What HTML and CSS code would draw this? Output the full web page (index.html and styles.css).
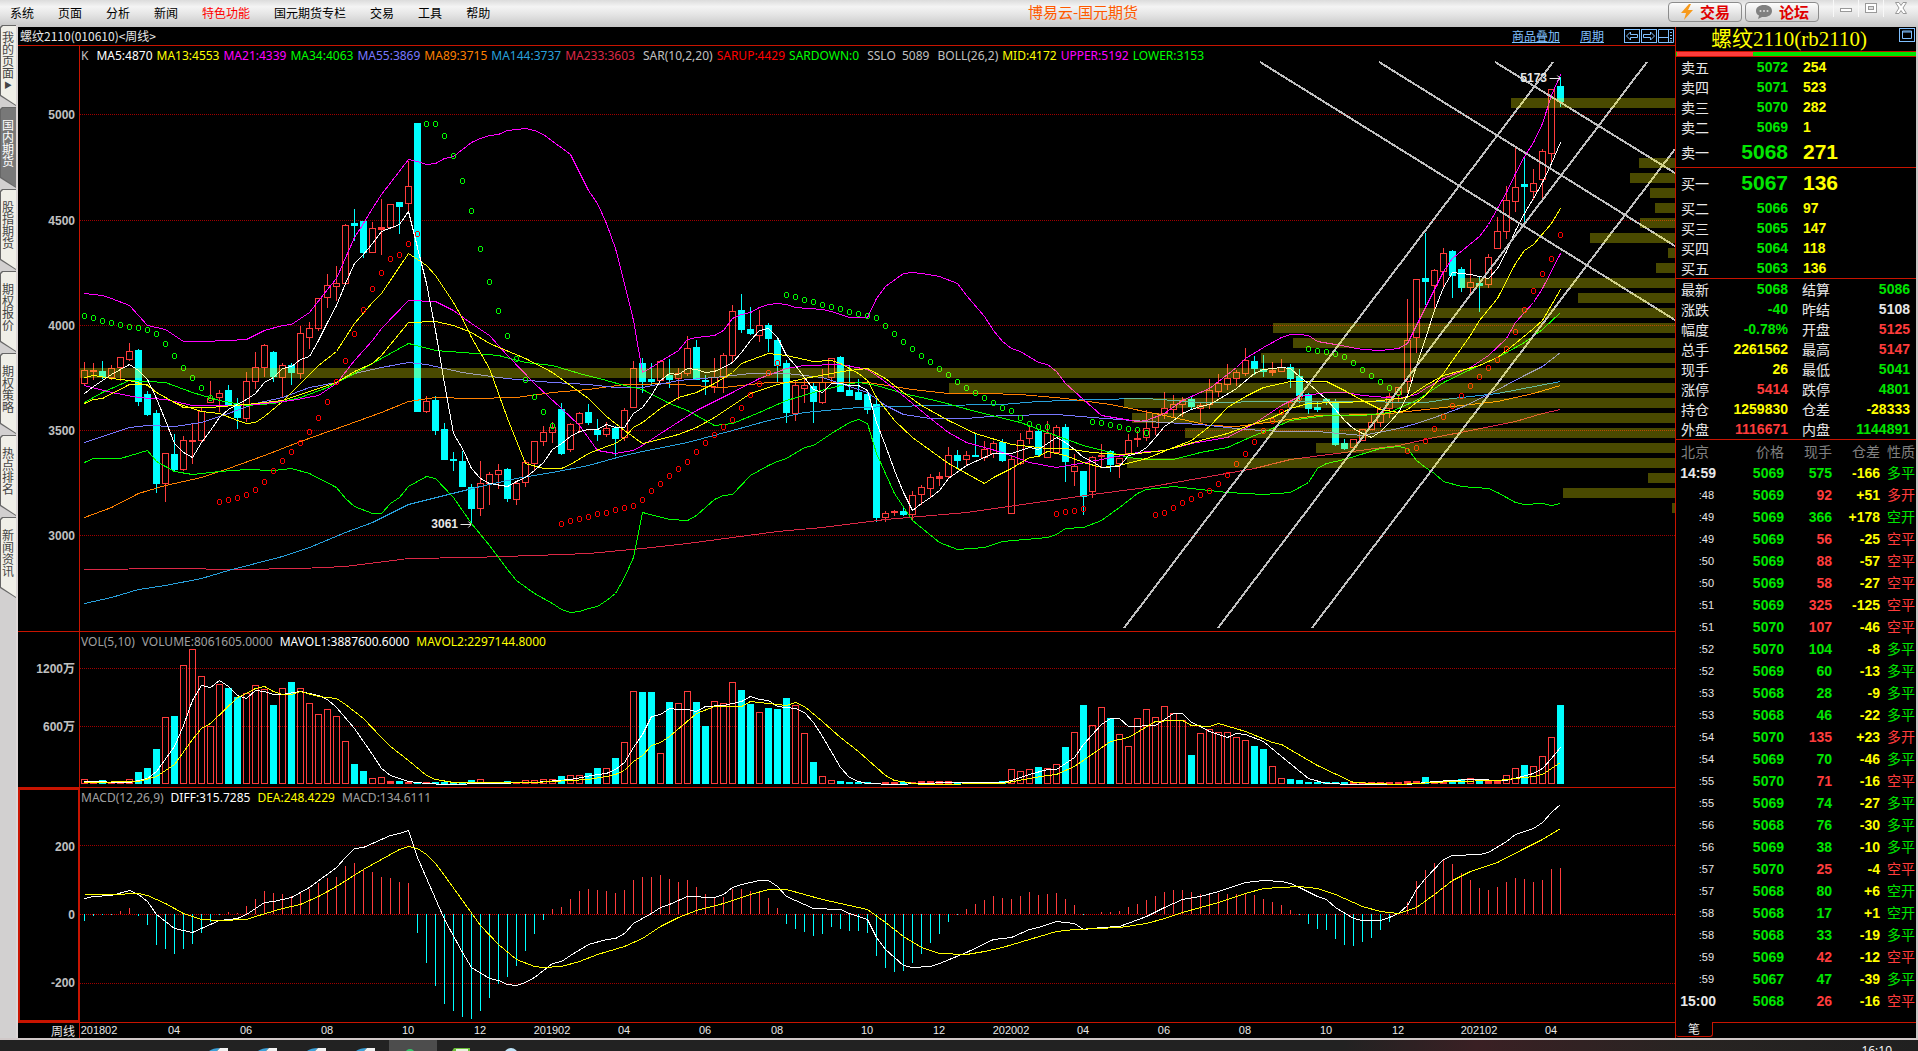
FILE: index.html
```html
<!DOCTYPE html>
<html lang="zh-CN">
<head>
    <meta charset="UTF-8">
    <meta name="viewport" content="width=device-width, initial-scale=1.0">
    <title>博易云-国元期货</title>
    <link rel="stylesheet" href="styles.css">
</head>
<body>
    <header class="menubar">
        <nav class="menu">
            <a href="#">系统</a>
            <a href="#">页面</a>
            <a href="#">分析</a>
            <a href="#">新闻</a>
            <a href="#" class="hot">特色功能</a>
            <a href="#">国元期货专栏</a>
            <a href="#">交易</a>
            <a href="#">工具</a>
            <a href="#">帮助</a>
        </nav>
        <h1 class="app-title">博易云-国元期货</h1>
        <div class="tools">
            <button class="tool-btn">
                <svg width="14" height="18" viewBox="0 0 14 18"><path d="M9 1 L1 10 H6 L4 17 L13 7 H8 L11 1 Z" fill="#f79a1c"/></svg>
                交易
            </button>
            <button class="tool-btn">
                <svg width="18" height="16" viewBox="0 0 18 16"><path d="M9 1 C4 1 1 3.500 1 7 C1 9 2 10.500 4 11.500 L3 15 L7 13 C13 13.500 17 11 17 7 C17 3.500 14 1 9 1 Z" fill="#808080"/><circle cx="5.500" cy="7" r="1" fill="#ddd"/><circle cx="9" cy="7" r="1" fill="#ddd"/><circle cx="12.500" cy="7" r="1" fill="#ddd"/></svg>
                论坛
            </button>
            <div class="window-btns">
                <button aria-label="最小化"><svg width="14" height="14" viewBox="0 0 14 14"><rect x="1.500" y="7.500" width="11" height="3" fill="#fff" stroke="#999"/></svg></button>
                <button aria-label="还原"><svg width="14" height="14" viewBox="0 0 14 14"><rect x="1.500" y="2.500" width="11" height="9" fill="#fff" stroke="#999"/><rect x="4.500" y="5.500" width="5" height="3" fill="#ddd" stroke="#999"/></svg></button>
                <button class="win-close" aria-label="关闭"><svg width="14" height="14" viewBox="0 0 14 14"><path d="M1.500 1.500 H5 L7 4.500 L9 1.500 H12.500 L9 7 L12.500 12.500 H9 L7 9.500 L5 12.500 H1.500 L5 7 Z" fill="#fff" stroke="#999"/></svg></button>
            </div>
        </div>
    </header>

    <main class="workspace">
        <aside class="side-tabs">
            <button class="side-tab arrow">我的页面<small>▶</small></button>
            <button class="side-tab active">国内期货</button>
            <button class="side-tab">股指期货</button>
            <button class="side-tab">期权报价</button>
            <button class="side-tab">期权策略</button>
            <button class="side-tab">热点排名</button>
            <button class="side-tab">新闻资讯</button>
        </aside>

        <section class="charts">
            <div class="chart-head">
                <span>螺纹2110(010610)&lt;周线&gt;</span>
                <div class="chart-links">
                    <a href="#">商品叠加</a>
                    <a href="#">周期</a>
                    <div class="chart-icons">
                        <button aria-label="向左"><svg width="16" height="14" viewBox="0 0 16 14"><rect x="0.500" y="0.500" width="15" height="13"/><path d="M2.500 7 L6.500 3 V5.500 H13.500 V8.500 H6.500 V11 Z"/></svg></button>
                        <button aria-label="向右"><svg width="16" height="14" viewBox="0 0 16 14"><rect x="0.500" y="0.500" width="15" height="13"/><path d="M13.500 7 L9.500 3 V5.500 H2.500 V8.500 H9.500 V11 Z"/></svg></button>
                        <button aria-label="侧栏"><svg width="16" height="14" viewBox="0 0 16 14"><path d="M0.500 0.500 H15.500 V13.500 H0.500 Z M10.500 0.500 V13.500 M0.500 8.500 H10.500 M12 3.500 H14 M12 6.500 H14 M12 9.500 H14 M12 12 H14"/></svg></button>
                    </div>
                </div>
            </div>

            <div class="panel panel-main">
                <div class="axis" id="axis-main"></div>
                <div class="plot">
                    <svg id="plot-main" viewBox="80 46 1595 585" preserveAspectRatio="none"></svg>
                    <p class="legend">
                        <span class="c-grey wide">K</span>
                        <span class="c-white">MA5:4870</span>
                        <span class="c-yellow">MA13:4553</span>
                        <span class="c-magenta">MA21:4339</span>
                        <span class="c-lime">MA34:4063</span>
                        <span class="c-violet">MA55:3869</span>
                        <span class="c-orange">MA89:3715</span>
                        <span class="c-blue">MA144:3737</span>
                        <span class="c-crimson wide">MA233:3603</span>
                        <span class="c-grey">SAR(10,2,20)</span>
                        <span class="c-red">SARUP:4429</span>
                        <span class="c-lime wide">SARDOWN:0</span>
                        <span class="c-grey wide">SSLO&nbsp; 5089</span>
                        <span class="c-grey">BOLL(26,2)</span>
                        <span class="c-yellow">MID:4172</span>
                        <span class="c-magenta">UPPER:5192</span>
                        <span class="c-lime">LOWER:3153</span>
                    </p>
                    <div id="marks"></div>
                </div>
            </div>

            <div class="panel panel-vol">
                <div class="axis" id="axis-vol"></div>
                <div class="plot">
                    <svg id="plot-vol" viewBox="80 632 1595 155" preserveAspectRatio="none"></svg>
                    <p class="legend loose">
                        <span class="c-dim">VOL(5,10)</span>
                        <span class="c-dim">VOLUME:8061605.0000</span>
                        <span class="c-white">MAVOL1:3887600.6000</span>
                        <span class="c-yellow">MAVOL2:2297144.8000</span>
                    </p>
                </div>
            </div>

            <div class="panel panel-macd">
                <div class="axis selected" id="axis-macd"></div>
                <div class="plot">
                    <svg id="plot-macd" viewBox="80 788 1595 234" preserveAspectRatio="none"></svg>
                    <p class="legend loose">
                        <span class="c-dim">MACD(12,26,9)</span>
                        <span class="c-white">DIFF:315.7285</span>
                        <span class="c-yellow">DEA:248.4229</span>
                        <span class="c-dim">MACD:134.6111</span>
                    </p>
                </div>
            </div>

            <div class="dates">
                <div class="period">周线</div>
                <div class="date-row" id="dates"></div>
            </div>
        </section>

        <section class="quote">
            <div class="quote-head">
                <h2>螺纹2110(rb2110)</h2>
                <button class="quote-max" aria-label="放大"><svg width="16" height="14" viewBox="0 0 16 14"><rect x="0.500" y="0.500" width="15" height="13"/><path d="M3.500 3 H12.500 V10.500 H3.500 Z M3.500 4 H12.500"/></svg></button>
            </div>
            <div class="ratio"><div class="ratio-red"></div></div>

            <table class="book">
                <tr><th>卖五</th><td class="down">5072</td><td class="qty">254</td></tr>
                <tr><th>卖四</th><td class="down">5071</td><td class="qty">523</td></tr>
                <tr><th>卖三</th><td class="down">5070</td><td class="qty">282</td></tr>
                <tr><th>卖二</th><td class="down">5069</td><td class="qty">1</td></tr>
                <tr class="best"><th>卖一</th><td class="down">5068</td><td class="qty">271</td></tr>
            </table>
            <table class="book">
                <tr class="best"><th>买一</th><td class="down">5067</td><td class="qty">136</td></tr>
                <tr><th>买二</th><td class="down">5066</td><td class="qty">97</td></tr>
                <tr><th>买三</th><td class="down">5065</td><td class="qty">147</td></tr>
                <tr><th>买四</th><td class="down">5064</td><td class="qty">118</td></tr>
                <tr><th>买五</th><td class="down">5063</td><td class="qty">136</td></tr>
            </table>
            <table class="book stats">
                <tr><th>最新</th><td class="down">5068</td><th>结算</th><td class="down">5086</td></tr>
                <tr><th>涨跌</th><td class="down">-40</td><th>昨结</th><td class="flat">5108</td></tr>
                <tr><th>幅度</th><td class="down">-0.78%</td><th>开盘</th><td class="up">5125</td></tr>
                <tr><th>总手</th><td class="num">2261562</td><th>最高</th><td class="up">5147</td></tr>
                <tr><th>现手</th><td class="num">26</td><th>最低</th><td class="down">5041</td></tr>
                <tr><th>涨停</th><td class="up">5414</td><th>跌停</th><td class="down">4801</td></tr>
                <tr><th>持仓</th><td class="num">1259830</td><th>仓差</th><td class="num">-28333</td></tr>
                <tr><th>外盘</th><td class="up">1116671</td><th>内盘</th><td class="down">1144891</td></tr>
            </table>
            <table class="ticks">
                <thead>
                    <tr><th>北京</th><th>价格</th><th>现手</th><th>仓差</th><th>性质</th></tr>
                </thead>
                <tbody id="ticks"></tbody>
            </table>
            <div class="quote-tabs"><button class="quote-tab">笔</button></div>
        </section>
    </main>

    <footer class="taskbar">
        <svg class="task-icons" width="540" height="11" viewBox="0 0 540 11">
            <rect x="389" width="48" height="11" fill="#4d4d4d"/>
            <g id="app-icon"><path d="M209 11 Q213 8 220 8 L217 11 Z" fill="#3aa0d8"/><path d="M220 8 H228 V11 H217 Z" fill="#f2f2f2"/></g>
            <use href="#app-icon" x="49"/>
            <use href="#app-icon" x="98"/>
            <use href="#app-icon" x="147"/>
            <circle cx="410" cy="14" r="5" fill="#35c46a"/>
            <path d="M452 11 L454 8 H470 V11 Z" fill="#6cbf3a"/>
            <path d="M456 11 V9 H468 V11 Z" fill="#e8f5df"/>
            <circle cx="511" cy="15" r="7" fill="#bfe3f7"/>
        </svg>
        <div class="clock">16:10</div>
    </footer>

    <script src="chart.js"></script>
</body>
</html>
```
FILE: styles.css
```css
* {
    box-sizing: border-box;
}

body {
    margin: 0;
    height: 100vh;
    display: flex;
    flex-direction: column;
    overflow: hidden;
    background-color: #000;
    color: #e8e8e8;
    font-family: "Noto Sans CJK SC", sans-serif;
    font-size: 12px;
}

button {
    margin: 0;
    padding: 0;
    border: none;
    background: none;
    font-family: inherit;
    cursor: pointer;
}

/* menu bar */

.menubar {
    flex: none;
    height: 27px;
    display: grid;
    grid-template-columns: 1fr auto 1fr;
    align-items: start;
    padding-left: 10px;
    background: linear-gradient(#dcdcdc, #f4f4f4 25%, #e4e4e4 55%, #c6c6c6);
}

.menu {
    display: flex;
    gap: 24px;
}

.menu a {
    color: #000;
    text-decoration: none;
    line-height: 25px;
}

.menu .hot {
    color: #f00;
}

.app-title {
    margin: 0;
    padding-left: 238px;
    font-size: 15px;
    font-weight: normal;
    line-height: 24px;
    color: #ff5a00;
}

.tools {
    display: flex;
    justify-content: flex-end;
    gap: 3px;
}

.tool-btn {
    width: 74px;
    height: 20px;
    margin-top: 2px;
    display: flex;
    align-items: center;
    justify-content: center;
    gap: 6px;
    border: 1px solid #8c8c8c;
    border-radius: 4px;
    background: linear-gradient(#fdfdfd, #d2d2d2);
    color: #e00000;
    font-size: 15px;
    font-weight: bold;
    line-height: 18px;
}

.window-btns {
    display: flex;
    margin: 0 1px 0 11px;
}

.window-btns button {
    width: 25px;
    height: 17px;
    border-left: 1px solid #f8f8f8;
}

.window-btns .win-close {
    width: 34px;
}

/* workspace */

.workspace {
    flex: 1;
    min-height: 0;
    display: flex;
    border-right: 2px solid #c8c4c4;
    border-bottom: 2px solid #d0c8c8;
}

.side-tabs {
    flex: none;
    width: 18px;
    margin-top: -2px;
    background-color: #d2d0d0;
    border-right: 2px solid #dcd6d6;
}

.side-tab {
    position: relative;
    z-index: 0;
    display: block;
    width: 16px;
    height: 82px;
    padding: 0 2px 10px;
    background-color: #666;
    clip-path: polygon(0 2px, 2px 0, 100% 0, 100% 81px, 0 71px);
    color: #444;
    font-size: 12px;
    line-height: 12px;
}

.side-tab::before {
    content: "";
    position: absolute;
    z-index: -1;
    inset: 1px 0 0 1px;
    background-color: #f0efe8;
    clip-path: polygon(0 2px, 2px 0, 100% 0, 100% 79px, 0 69px);
}

.side-tab.active {
    color: #fff;
}

.side-tab.active::before {
    background-color: #787878;
}

.side-tab small {
    display: block;
    font-size: 8px;
}

.charts {
    flex: 1;
    min-width: 0;
    display: flex;
    flex-direction: column;
}

.chart-head {
    flex: none;
    height: 19px;
    display: flex;
    justify-content: space-between;
    align-items: center;
    padding: 0 1px 0 2px;
    border-bottom: 1px solid #c81400;
    line-height: 18px;
}

.chart-links {
    display: flex;
    align-items: center;
    gap: 20px;
}

.chart-links a {
    color: #80c0ff;
}

.chart-icons {
    display: flex;
    gap: 1px;
}

.chart-icons button,
.quote-max {
    display: flex;
}

.chart-icons svg,
.quote-max svg {
    fill: none;
    stroke: #80c0ff;
}

.panel {
    min-height: 0;
    display: flex;
    border-bottom: 1px solid #c81400;
}

.panel-main {
    flex: 585 0 0;
}

.panel-vol {
    flex: 155 0 0;
}

.panel-macd {
    flex: 234 0 0;
}

.axis {
    position: relative;
    flex: none;
    width: 62px;
    border-right: 1px solid #c81400;
    color: #c0c0c0;
    font-family: "Liberation Sans", "Noto Sans CJK SC", sans-serif;
    font-weight: bold;
}

.axis.selected {
    border: 1px solid #c81400;
    box-shadow: inset 0 0 0 1px #c81400;
}

.axis span {
    position: absolute;
    right: 4px;
    line-height: 16px;
    margin-top: -7px;
}

.plot {
    position: relative;
    flex: 1;
    min-width: 0;
}

.plot > svg {
    position: absolute;
    width: 100%;
    height: 100%;
    shape-rendering: crispEdges;
}

.plot path,
.plot line {
    fill: none;
    vector-effect: non-scaling-stroke;
}

.legend {
    position: relative;
    display: flex;
    gap: 4px;
    margin: 0;
    padding-left: 1px;
    font-family: "Noto Sans", sans-serif;
    line-height: 20px;
    white-space: nowrap;
}

.legend .wide {
    margin-right: 4px;
}

.legend.loose {
    gap: 7px;
}

.c-grey { color: #c0c0c0; }
.c-dim { color: #a0a0a0; }
.c-white { color: #fff; }
.c-yellow { color: #ff0; }
.c-magenta { color: #f0f; }
.c-lime { color: #0f0; }
.c-violet { color: #7878ff; }
.c-orange { color: #ff8000; }
.c-blue { color: #28a0dc; }
.c-crimson { color: #dc2846; }
.c-red { color: #f00; }

.mark {
    position: absolute;
    display: flex;
    align-items: center;
    gap: 2px;
    height: 16px;
    margin-top: -7px;
    transform: translateX(-100%);
    font-family: "Liberation Sans", sans-serif;
    font-weight: bold;
}

.mark svg {
    fill: none;
    stroke: #e8e8e8;
}

.dates {
    flex: none;
    height: 15px;
    display: flex;
    line-height: 15px;
}

.period {
    width: 62px;
    padding-right: 4px;
    border-right: 1px solid #c81400;
    text-align: right;
}

.date-row {
    position: relative;
    flex: 1;
    font-family: "Liberation Sans", sans-serif;
    font-size: 11px;
}

.date-row span {
    position: absolute;
    transform: translateX(-50%);
}

/* quote panel */

.quote {
    flex: none;
    width: 241px;
    display: flex;
    flex-direction: column;
    border-left: 1px solid #c81400;
    font-size: 14px;
}

.quote-head {
    position: relative;
    height: 25px;
    border-bottom: 1px solid #c81400;
}

.quote-head h2 {
    margin: 0;
    padding-right: 14px;
    text-align: center;
    font-family: "Liberation Serif", "Noto Sans CJK SC", serif;
    font-size: 21px;
    font-weight: normal;
    line-height: 24px;
    color: #ff0;
}

.quote-max {
    position: absolute;
    top: 1px;
    right: 1px;
}

.ratio {
    height: 5px;
    padding: 0 1px;
    border-bottom: 1px solid #c81400;
    background-color: #00e600;
}

.ratio-red {
    width: 32%;
    height: 4px;
    background-color: #ff3c3c;
}

table {
    width: 100%;
    border-collapse: collapse;
    table-layout: fixed;
}

th,
td {
    padding: 0;
    height: 20px;
    line-height: 20px;
}

th {
    font-weight: normal;
    text-align: left;
}

td {
    font-family: "Liberation Sans", "Noto Sans CJK SC", sans-serif;
    font-weight: bold;
    text-align: right;
}

.book {
    border-bottom: 1px solid #c81400;
}

.book th:first-child {
    width: 40px;
    padding-left: 5px;
}

.book td:nth-child(2) {
    width: 72px;
}

.book .qty {
    padding-left: 15px;
    text-align: left;
    color: #ff0;
}

.book .best th,
.book .best td {
    height: 30px;
    line-height: 30px;
}

.book .best td {
    font-size: 21px;
}

.stats th:nth-child(3) {
    width: 48px;
    padding-left: 14px;
}

.stats td:last-child {
    padding-right: 6px;
}

.up { color: #ff3c3c; }
.down { color: #00e600; }
.num { color: #ff0; }
.flat { color: #e8e8e8; }

.ticks th,
.ticks td {
    height: 22px;
    line-height: 22px;
}

.ticks th {
    color: #808080;
    text-align: right;
}

.ticks th:nth-child(1) {
    width: 40px;
    padding-left: 5px;
    text-align: left;
}

.ticks th:nth-child(2) {
    width: 68px;
}

.ticks th:nth-child(3),
.ticks th:nth-child(4) {
    width: 48px;
}

.ticks th:last-child,
.ticks td:last-child {
    padding-right: 1px;
    font-weight: normal;
}

.ticks .sec {
    padding-right: 2px;
    font-size: 11px;
    font-weight: normal;
}

.quote-tabs {
    flex: none;
    display: flex;
    height: 16px;
    margin-top: auto;
}

.quote-tabs::after {
    content: "";
    flex: 1;
    border-top: 1px solid #c81400;
}

.quote-tab {
    width: 37px;
    height: 15px;
    border: 1px solid #c81400;
    border-width: 0 1px 1px 0;
    border-radius: 0 0 3px 3px;
    color: #e8e8e8;
    font-size: 12px;
    line-height: 14px;
}

/* taskbar */

.taskbar {
    flex: none;
    height: 11px;
    display: flex;
    justify-content: space-between;
    overflow: hidden;
    background: linear-gradient(90deg, #222, #222 70%, #3a2024 77%, #282422 88%, #202020);
}

.clock {
    padding: 4px 26px 0 0;
    font-family: "Open Sans", sans-serif;
    font-size: 12px;
    line-height: 14px;
    color: #fff;
}
```
FILE: chart.js
```js
const UP = '#ff3c3c';
const DOWN = '#00ffff';
const STEP = 9;
const X0 = 84.5;

// one bar per week: colour, body top, body bottom, high, low
const bars = `
r 370 383 362 385|r 370 371 363 380|c 371 376 361 379|r 368 377 365 380|r 357 367 357 381|r 351 359 343 361
c 350 401 349 406|c 394 414 391 416|c 413 483 410 493|r 453 483 453 502|c 454 469 434 472|r 440 469 436 471
r 440 441 423 464|r 411 440 407 442|r 398 402 381 403|r 393 397 390 412|c 390 404 385 406|c 404 417 398 429
r 381 418 372 422|r 367 381 352 389|r 345 367 344 377|c 352 376 351 382|r 365 377 363 398|c 365 372 363 385
r 333 373 326 379|r 328 337 322 349|r 298 328 298 331|r 285 297 274 308|r 283 286 266 301|r 225 283 224 283
c 223 225 209 241|c 221 252 221 258|r 228 252 222 253|r 227 229 199 255|r 204 227 204 228|c 202 206 202 234
r 186 203 161 212|c 123 411 123 412|r 401 411 396 413|c 400 430 396 435|c 429 459 423 460|c 459 460 452 471
c 461 486 451 486|c 487 508 484 523|r 483 508 461 516|r 474 483 472 505|r 470 474 464 489|c 469 498 468 502
r 483 499 482 505|r 462 482 460 487|r 441 463 441 470|r 432 441 426 446|r 427 432 422 443|c 409 453 403 455
r 424 449 423 452|r 413 423 412 433|c 412 422 404 425|c 430 434 419 441|r 428 434 422 437|c 428 438 426 456
r 410 437 408 441|r 368 407 361 407|c 363 381 358 393|c 379 381 363 385|r 361 380 360 381|c 375 379 359 388
r 373 378 368 400|r 348 373 336 376|c 347 379 340 380|c 380 381 375 395|r 377 387 358 393|r 355 377 353 393
r 311 355 305 362|c 310 329 294 333|c 329 333 307 335|r 325 335 310 342|c 325 338 323 352|c 340 365 337 382
c 363 412 360 423|r 385 413 380 421|r 385 388 379 403|c 386 401 383 423|r 382 402 369 404|r 358 377 358 382
c 357 391 356 392|c 390 395 365 396|c 392 399 379 399|c 394 409 393 414|c 404 517 399 522|r 513 517 511 522
r 511 512 510 516|c 511 514 507 516|r 495 514 491 520|r 487 494 485 505|r 477 488 474 497|r 476 478 472 486
r 455 476 447 478|c 455 460 450 468|r 455 459 451 465|c 455 456 434 456|r 449 457 441 461|r 443 453 441 458
c 442 460 439 462|r 459 513 456 514|r 440 463 433 465|r 431 438 425 444|c 431 454 430 456|r 433 457 421 457
r 427 452 425 453|c 427 461 424 482|r 466 471 454 486|c 471 496 471 515|r 457 491 456 498|r 455 456 444 467
c 451 464 450 472|r 458 463 458 478|r 440 453 434 455|r 438 439 431 447|r 428 437 410 441|r 413 427 413 435
r 408 413 392 419|r 404 409 395 417|r 400 404 397 417|c 399 406 396 409|r 405 408 403 422|r 390 404 379 409
r 383 391 374 397|r 378 384 364 390|r 372 378 370 386|r 360 373 348 376|c 361 368 356 375|c 369 371 355 377
r 370 372 362 376|r 367 371 359 371|c 367 378 364 388|c 376 395 369 403|c 394 408 393 414|c 407 409 402 412
c 399 401 398 405|c 402 444 399 446|c 443 448 439 450|r 439 447 439 448|r 429 440 429 441|r 422 429 415 430
r 409 422 407 427|r 396 408 393 418|r 387 394 387 403|r 340 381 299 393|r 279 337 279 353|c 278 281 233 305
r 270 285 269 310|r 253 271 248 287|c 251 275 250 298|c 269 287 267 292|r 282 287 259 295|c 283 285 276 312
r 257 284 254 288|r 231 248 217 248|r 200 231 186 239|r 187 201 148 212|c 184 186 158 223|r 183 191 169 200
r 151 179 149 198|r 89 153 89 165|c 86 101 77 107`.trim().split(/[|\n]/).map(row => {
    const [color, ...v] = row.split(' ');
    return { up: color === 'r', top: +v[0], bottom: +v[1], high: +v[2], low: +v[3] };
});

// curves: week index, y, week index, y ...
const mainLines = [
    ['#dc2846', '0 569 10 568 17 569 24 568 29 566 36 558 43 557 50 555 56 553 62 548 67 543 77 531 82 527 89 519 98 512 105 503 112 494 118 487 125 476 130 468 134 459 140 452 146 445 150 437 154 430 159 421 162 413 164 409'],
    ['#28a0dc', '0 603 3 597 6 589 9 585 13 578 16 570 19 563 22 556 25 547 29 532 32 522 36 504 40 495 44 486 48 478 52 472 56 465 60 455 62 451 67 442 72 430 76 420 80 412 86 407 94 405 102 404 106 401 112 399 118 398 124 402 133 401 140 401 149 402 152 398 157 393 164 381'],
    ['#ff8000', '0 517 3 507 6 493 9 485 13 477 16 468 20 455 24 441 29 425 33 412 36 401 39 397 43 398 48 397 52 392 56 389 60 384 62 384 64 383 66 384 71 387 76 382 84 382 87 382 92 389 96 393 100 393 104 394 109 398 114 404 120 415 125 425 128 426 133 420 137 415 144 414 149 409 153 405 157 401 161 393 164 385'],
    ['#7878ff', '0 442 3 433 5 427 7 425 10 426 13 422 16 413 19 403 22 397 25 387 28 382 30 373 33 367 36 362 38 364 42 372 46 377 48 379 52 382 56 384 59 387 62 387 66 380 70 377 74 373 78 373 82 377 84 383 87 392 89 405 91 414 94 418 98 418 102 415 108 414 112 417 118 421 124 424 129 429 133 431 137 431 142 435 146 428 148 423 150 417 153 407 156 394 160 375 162 366 164 352'],
    ['#00ff00', '0 402 2 392 5 380 9 382 12 392 15 400 18 405 21 403 24 397 27 387 30 373 33 358 36 343 39 350 42 352 46 355 49 362 52 365 55 373 58 380 60 385 62 389 65 403 67 410 70 425 72 423 75 412 78 400 81 392 84 385 86 382 88 385 91 393 95 401 99 411 104 422 107 432 111 445 114 452 116 457 118 459 121 459 124 452 127 447 130 435 132 428 134 420 138 415 142 415 145 412 148 400 151 382 154 369 157 357 160 342 162 329 164 312'],
    ['#ff00ff', '0 385 3 392 6 397 9 399 12 405 16 405 19 404 23 400 26 395 28 383 30 360 32 340 33 328 36 300 39 301 41 310 43 323 45 335 47 355 50 383 53 408 55 425 57 450 59 453 61 450 62 445 64 433 68 410 72 392 75 378 78 368 80 365 84 364 87 369 88 375 90 388 92 403 94 418 96 432 98 442 102 452 105 462 108 467 110 464 113 459 117 452 120 450 123 443 127 437 130 423 133 405 135 396 138 392 140 392 142 395 146 398 148 394 149 388 151 378 154 367 156 355 158 338 159 322 161 302 162 288 164 253'],
    ['#ffff00', '0 403 1 399 2 398 5 384 7 384 8 392 11 407 14 407 18 404 20 402 22 400 24 394 28 382 30 371 32 363 33 355 35 333 36 322 39 321 41 325 43 332 45 343 49 358 52 372 54 385 56 398 58 416 60 430 62 443 63 441 66 434 68 427 70 417 72 405 74 393 77 384 80 378 83 373 85 370 87 368 89 378 91 392 93 405 96 420 99 433 103 444 106 447 107 448 109 448 112 452 115 454 117 453 120 450 124 440 127 433 130 423 132 417 134 408 136 403 139 402 143 401 147 397 149 385 151 375 155 365 157 357 159 343 161 328 162 320 164 289'],
    ['#ffff00', '0 377 1 375 3 378 5 380 7 385 8 392 10 402 12 408 13 411 15 413 17 420 18 423 19 422 20 416 22 401 24 383 26 365 28 351 29 337 30 323 32 302 33 293 36 253 38 265 39 275 41 302 42 318 43 337 45 368 47 418 49 463 51 468 53 468 54 464 56 453 58 446 59 443 60 437 61 427 62 422 64 408 66 397 68 392 70 383 72 372 73 363 76 353 78 355 81 361 83 360 84 363 86 373 87 380 88 397 90 420 92 437 94 450 96 463 98 473 100 483 101 477 103 468 105 457 106 456 107 451 109 455 111 462 113 467 115 465 118 458 121 447 123 440 125 426 127 407 129 396 131 387 133 383 134 381 138 381 140 390 142 400 144 409 146 412 147 409 149 395 151 373 152 360 154 335 155 320 157 298 159 263 160 250 161 244 163 223 164 208'],
    ['#ffffff', '0 393 1 386 3 374 5 364 6 370 7 379 8 398 9 420 10 443 11 452 12 457 13 442 14 430 15 417 16 409 17 404 18 399 19 393 20 382 21 377 22 368 23 366 24 359 25 356 26 340 27 322 28 305 29 283 30 263 31 254 32 243 33 231 35 224 36 211 37 247 38 283 39 330 40 383 41 433 42 448 43 468 44 478 45 483 47 486 48 481 49 477 50 470 51 462 52 449 53 443 54 436 55 431 56 429 57 429 58 424 59 427 60 427 61 413 62 407 63 395 64 380 65 373 66 374 67 368 68 369 69 372 70 371 71 367 72 362 73 352 74 340 75 330 76 328 77 337 78 355 79 365 80 377 81 389 82 392 83 383 84 383 85 385 86 385 87 390 88 422 89 445 90 470 91 492 92 510 93 503 94 497 95 490 96 478 98 465 100 457 101 453 103 453 105 447 106 449 107 443 108 437 109 442 110 449 111 457 112 461 113 467 115 466 116 455 117 453 118 447 119 437 120 426 121 420 122 413 123 409 124 406 125 404 126 399 128 388 130 373 131 369 133 367 134 368 135 376 136 383 137 391 138 399 139 409 140 420 141 428 142 433 143 437 144 431 145 422 146 412 147 395 148 365 149 338 150 310 151 287 152 272 153 273 154 274 155 276 156 278 157 268 158 251 159 230 160 213 161 198 162 182 163 163 164 142'],
    ['#ff00ff', '0 293 1 294 2 295 3 298 5 305 6 315 7 325 9 329 11 341 13 341 16 340 18 339 20 330 22 325 23 324 25 312 27 289 28 278 30 237 31 223 32 208 33 194 36 159 37 161 38 164 39 163 40 158 41 156 43 142 44 138 45 135 46 134 47 130 49 128 50 130 51 134 54 154 56 190 57 203 58 223 59 248 60 283 61 320 62 372 63 367 64 361 66 350 67 339 68 337 70 335 71 330 72 318 73 314 74 312 75 307 76 304 77 303 78 304 79 307 82 309 83 311 85 317 87 317 88 298 89 286 91 273 92 272 93 273 95 276 97 283 98 295 100 316 101 330 102 341 103 348 104 351 106 362 107 364 108 371 109 383 113 415 115 418 117 421 118 420 120 413 122 400 124 392 125 388 128 367 129 358 131 347 133 337 134 334 135 334 136 335 137 341 139 344 142 349 144 350 146 348 147 343 148 325 151 271 152 258 155 236 156 224 158 192 159 173 160 156 161 142 162 123 163 95 164 74'],
    ['#00ff00', '0 462 1 458 4 458 7 450 8 461 10 471 12 474 15 471 18 469 21 470 23 468 25 473 28 487 29 498 30 506 32 513 33 513 34 503 35 497 36 486 38 476 39 478 41 497 43 523 45 545 47 569 48 580 50 593 52 603 53 609 54 612 55 611 56 608 57 606 58 600 59 593 60 577 61 557 62 512 65 519 67 520 68 515 70 499 71 495 72 494 74 475 76 465 77 461 78 458 80 447 81 445 83 433 85 422 86 419 87 423 88 453 90 493 92 520 95 542 97 549 100 547 102 541 107 537 108 534 109 528 111 527 113 520 115 507 117 493 118 489 121 486 124 489 127 492 131 494 134 492 136 482 137 468 138 463 140 459 144 448 146 446 147 448 148 460 149 467 150 473 151 481 153 486 156 488 157 492 159 502 160 504 162 503 163 505 164 503']
];

// SAR dots: first week, then one y per week
const sar = [
    ['#00ff00', 0, [315, 317, 320, 322, 324, 326, 327, 329, 333, 343, 355, 367, 377, 387, 397]],
    ['#00ff00', 38, [123, 123, 135, 155, 180, 210, 248, 281, 310, 335, 358, 379, 396, 411, 425]],
    ['#00ff00', 78, [294, 296, 299, 301, 304, 306, 308, 311, 313, 315, 317, 325, 333, 341, 348, 355, 361, 368, 374, 381, 387, 392, 397, 402, 407, 410, 417, 423, 426, 426]],
    ['#00ff00', 112, [421, 422, 424, 426, 428, 429, 432]],
    ['#00ff00', 136, [348, 350, 351, 353, 356, 362, 369, 375, 381, 387, 392]],
    ['#ff0000', 15, [501, 499, 497, 494, 489, 481, 470, 460, 451, 442, 431, 417, 401, 381, 360, 333, 309, 288, 272, 258, 254, 243, 233]],
    ['#ff0000', 53, [523, 520, 518, 516, 513, 512, 509, 507, 505, 499, 490, 483, 475, 468, 461, 451, 442, 434, 426, 419, 407, 394, 383, 372, 362]],
    ['#ff0000', 108, [513, 511, 510, 508]],
    ['#ff0000', 119, [514, 512, 507, 502, 498, 494, 490, 483, 474, 463, 453, 441, 430, 420, 411, 404, 397]],
    ['#ff0000', 147, [450, 447, 440, 428, 416, 405, 395, 385, 376, 367, 359, 348, 331, 309, 290, 273, 258, 234]]
];

// volume by price: y, left edge
const profile = [
    [98, 1511], [158, 1639], [173, 1630], [188, 1650], [203, 1655], [218, 1640], [233, 1590], [248, 1668],
    [263, 1656], [278, 1460], [293, 1578], [308, 1419], [323, 1273], [338, 1293], [353, 1261], [368, 80],
    [383, 949], [398, 1124], [413, 1132], [428, 1185], [443, 1316], [458, 1127], [473, 1648], [488, 1563], [503, 1672]
];

const trends = [
    [1124, 628, 1553, 62], [1218, 628, 1647, 62], [1312, 628, 1675, 149],
    [1260, 62, 1675, 320], [1379, 62, 1675, 246], [1495, 62, 1675, 173]
];

const volumes = [
    4, 2, 3, 1, 1, 4, 11, 15, 34, 66, 67, 118, 134, 107, 57, 99, 95, 86, 90, 98, 94, 78, 95, 101, 95, 80, 69, 74, 67, 42,
    19, 12, 5, 6, 2, 2, 1, 1, 1, 1, 1, 1, 1, 3, 4, 1, 1, 2, 1, 3, 3, 4, 4, 7, 8, 8, 10, 15, 15, 25,
    41, 92, 91, 91, 30, 81, 80, 92, 81, 57, 82, 80, 101, 93, 79, 71, 75, 74, 85, 78, 50, 21, 7, 3, 2, 1, 1, 1, 0, 1,
    1, 1, 1, 2, 2, 2, 2, 1, 1, 1, 1, 1, 2, 14, 12, 14, 16, 15, 19, 36, 51, 78, 58, 76, 65, 49, 37, 65, 74, 66,
    77, 70, 63, 28, 50, 54, 51, 51, 46, 43, 37, 34, 17, 5, 4, 3, 1, 1, 1, 1, 1, 1, 1, 1, 1, 1, 1, 2, 2, 6,
    2, 2, 3, 4, 5, 3, 2, 2, 8, 15, 18, 17, 27, 46, 78
];

const volLines = [
    ['#ffffff', '0 781 5 782 7 778 8 771 10 746 11 725 12 700 13 685 14 687 15 680 16 686 17 695 18 698 19 690 20 691 21 694 22 694 24 691 26 695 27 699 28 707 30 728 32 754 33 768 34 775 36 781 38 783 40 784 45 783 50 782 54 779 57 774 58 773 59 769 60 762 61 747 62 734 63 716 64 714 65 708 66 709 67 709 68 711 69 706 71 705 73 701 74 696 75 699 76 700 77 706 79 708 80 712 81 722 82 736 84 767 85 777 86 781 87 783 90 784 96 782 102 782 103 780 105 774 107 769 108 769 109 763 110 757 111 744 113 724 114 718 115 718 116 726 119 725 121 713 122 713 123 722 124 726 125 731 127 737 128 733 129 734 131 741 133 756 136 778 138 783 141 784 147 784 150 781 154 779 158 780 161 773 162 768 163 758 164 747'],
    ['#ffff00', '0 782 6 781 8 776 10 764 12 739 13 728 14 723 17 697 18 693 19 688 20 686 21 691 22 694 23 694 24 691 26 696 28 698 29 704 31 718 33 737 34 746 36 760 38 775 39 779 41 782 50 782 56 779 58 776 59 774 60 770 61 761 62 755 63 745 64 742 65 736 68 713 70 706 73 706 74 701 78 705 79 702 80 706 82 721 84 737 86 751 89 775 90 780 93 784 102 783 105 778 107 775 108 774 110 766 114 741 116 737 119 721 121 720 122 720 123 725 125 726 126 723 129 731 132 742 133 744 137 765 141 782 146 784 152 781 157 780 161 776 162 774 164 762']
];

const macd = [
    -7, -2, -1, -1, 3, 6, -2, -11, -31, -35, -40, -35, -30, -19, -8, -1, 2, 1, 8, 15, 23, 21, 20, 18, 22, 25, 31, 36, 37, 48,
    51, 44, 42, 37, 36, 32, 31, -19, -49, -72, -90, -97, -103, -105, -97, -84, -70, -63, -52, -37, -20, -6, 5, 7, 15, 23, 25, 24, 23, 21,
    24, 34, 37, 37, 39, 35, 32, 34, 27, 20, 16, 17, 25, 25, 23, 21, 16, 6, -10, -15, -18, -22, -20, -13, -15, -17, -17, -19, -42, -54,
    -58, -57, -49, -40, -29, -20, -8, -1, 5, 10, 14, 18, 16, 15, 18, 22, 19, 20, 21, 15, 9, -1, 0, 2, 2, 3, 7, 10, 14, 18,
    22, 24, 24, 22, 20, 19, 21, 20, 20, 21, 19, 15, 12, 9, 4, -1, -10, -15, -16, -25, -31, -32, -28, -24, -16, -8, 0, 12, 33, 44,
    51, 55, 50, 41, 34, 26, 24, 27, 32, 36, 35, 32, 34, 45, 46
];

const macdLines = [
    ['#ffffff', '0 898 1 896 3 895 5 890 6 894 7 901 8 914 10 928 12 932 15 920 17 918 18 914 19 908 20 902 21 901 23 897 25 887 28 867 29 857 30 848 31 847 34 835 35 833 36 830 37 857 40 919 42 952 43 967 45 978 46 980 47 984 48 985 49 982 50 977 52 963 53 961 54 955 56 944 58 939 59 938 60 933 61 923 62 918 63 913 64 907 65 904 67 896 70 897 71 894 72 887 73 884 75 880 76 880 77 886 78 896 80 904 81 908 84 909 85 913 87 919 88 937 89 949 91 965 92 967 94 966 95 963 98 952 101 939 103 937 105 929 106 927 108 921 110 923 111 929 113 927 115 926 118 916 120 907 122 899 124 896 126 891 128 885 129 882 131 880 133 881 134 883 135 887 137 896 138 899 139 907 141 918 142 920 144 920 145 917 146 913 147 905 148 889 149 878 151 859 152 855 155 854 156 852 158 841 159 834 161 828 162 822 163 812 164 804'],
    ['#ffff00', '0 894 3 894 6 893 7 895 9 903 11 913 13 919 15 920 18 919 19 916 22 908 24 904 26 896 28 886 31 869 34 854 35 849 36 846 37 848 38 854 39 863 40 875 42 900 44 925 46 944 48 959 50 966 51 967 53 966 55 961 57 954 60 946 62 938 64 926 66 917 68 910 71 903 74 894 76 889 78 889 80 894 82 899 87 909 89 922 91 936 93 947 95 953 98 954 100 951 102 947 105 939 108 931 110 929 115 927 118 923 120 918 122 912 126 902 129 893 131 888 133 887 135 886 137 888 139 894 142 906 144 911 146 913 148 907 150 894 152 880 154 871 157 862 160 848 162 839 164 828']
];

function centre(i) {
    return X0 + i * STEP;
}

function line(x1, y1, x2, y2, color, extra = '') {
    return `<line x1="${x1}" y1="${y1}" x2="${x2}" y2="${y2}" stroke="${color}" ${extra}/>`;
}

function grid(levels, color = '#a00000') {
    return levels.map(y => line(80, y + 0.5, 1675, y + 0.5, color, 'stroke-dasharray="1 1"')).join('');
}

function curve([color, text]) {
    const v = text.split(' ').map(Number);
    let d = '';
    for (let n = 0; n < v.length; n += 2) {
        d += `${n ? 'L' : 'M'}${centre(v[n])} ${v[n + 1] + 0.5}`;
    }
    return `<path d="${d}" stroke="${color}"/>`;
}

function box(i, top, bottom, up) {
    const x = centre(i) - 3;
    if (up && bottom - top > 2) {
        return `<path d="M${x} ${top + 0.5}h6V${bottom + 0.5}h-6Z" stroke="${UP}"/>`;
    }
    return `<rect x="${x - 0.5}" y="${top}" width="7" height="${Math.max(1, bottom - top + 1)}" fill="${up ? UP : DOWN}"/>`;
}

function candle(bar, i) {
    const color = bar.up ? UP : DOWN;
    const x = centre(i);
    return line(x, bar.high, x, bar.top, color) +
        line(x, bar.bottom, x, bar.low, color) +
        box(i, bar.top, bar.bottom, bar.up);
}

function drawMain() {
    let out = grid([114, 220, 325, 430, 535]);
    out += bars.map(candle).join('');
    out += mainLines.map(curve).join('');
    sar.forEach(([color, first, ys]) => {
        ys.forEach((y, n) => {
            out += `<path d="M${centre(first + n) - 1} ${y - 1.5}h2l1 1v3l-1 1h-2l-1 -1v-3Z" stroke="${color}"/>`;
        });
    });
    out += trends.map(t => line(...t, '#c0c0c0', 'stroke-width="2"')).join('');
    out += profile.map(([y, x]) => `<rect x="${x}" y="${y}" width="${1675 - x}" height="10" fill="#ff0" fill-opacity="0.29"/>`).join('');
    document.getElementById('plot-main').innerHTML = out;
}

function drawVolume() {
    let out = grid([668, 726]);
    out += volumes.map((h, i) => box(i, 783 - h, 783, bars[i].up)).join('');
    out += volLines.map(curve).join('');
    document.getElementById('plot-vol').innerHTML = out;
}

function drawMacd() {
    let out = grid([845, 983]) + grid([914], '#e00000');
    out += macd.map((v, i) => line(centre(i), 914, centre(i), 914 - v, v > 0 ? UP : DOWN)).join('');
    out += macdLines.map(curve).join('');
    document.getElementById('plot-macd').innerHTML = out;
}

function drawAxis(id, top, height, labels) {
    document.getElementById(id).innerHTML = labels.map(([text, y]) =>
        `<span style="top:${(y - top) / height * 100}%">${text}</span>`).join('');
}

function drawDates() {
    const labels = [
        ['201802', 99], ['04', 174], ['06', 246], ['08', 327], ['10', 408], ['12', 480], ['201902', 552], ['04', 624],
        ['06', 705], ['08', 777], ['10', 867], ['12', 939], ['202002', 1011], ['04', 1083], ['06', 1164], ['08', 1245],
        ['10', 1326], ['12', 1398], ['202102', 1479], ['04', 1551]
    ];
    document.getElementById('dates').innerHTML = labels.map(([text, x]) =>
        `<span style="left:${(x - 80) / 1595 * 100}%">${text}</span>`).join('');
}

function drawMarks() {
    const marks = [['5173', 1560, 77], ['3061', 471, 523]];
    document.getElementById('marks').innerHTML = marks.map(([text, x, y]) =>
        `<div class="mark" style="left:${(x - 80) / 1595 * 100}%;top:${(y - 46) / 585 * 100}%">${text}
        <svg width="11" height="8" viewBox="0 0 11 8"><path d="M0 4.5H11M8 1.500L11 4.500L8 7.500"/></svg></div>`).join('');
}

// time, price, lots, position change, kind
const ticks = [
    ['14:59', 5069, 575, '-166', '多平'], [':48', 5069, 92, '+51', '多开'], [':49', 5069, 366, '+178', '空开'],
    [':49', 5069, 56, '-25', '空平'], [':50', 5069, 88, '-57', '空平'], [':50', 5069, 58, '-27', '空平'],
    [':51', 5069, 325, '-125', '空平'], [':51', 5070, 107, '-46', '空平'], [':52', 5070, 104, '-8', '多平'],
    [':52', 5069, 60, '-13', '多平'], [':53', 5068, 28, '-9', '多平'], [':53', 5068, 46, '-22', '多平'],
    [':54', 5070, 135, '+23', '多开'], [':54', 5069, 70, '-46', '多平'], [':55', 5070, 71, '-16', '空平'],
    [':55', 5069, 74, '-27', '多平'], [':56', 5068, 76, '-30', '多平'], [':56', 5069, 38, '-10', '多平'],
    [':57', 5070, 25, '-4', '空平'], [':57', 5068, 80, '+6', '空开'], [':58', 5068, 17, '+1', '空开'],
    [':58', 5068, 33, '-19', '多平'], [':59', 5069, 42, '-12', '空平'], [':59', 5067, 47, '-39', '多平'],
    ['15:00', 5068, 26, '-16', '空平']
];

function drawTicks() {
    document.getElementById('ticks').innerHTML = ticks.map(([time, price, lots, pos, kind]) => {
        const side = kind === '多开' || kind === '空平' ? 'up' : 'down';
        return `<tr><td class="${time[0] === ':' ? 'sec' : ''}">${time}</td><td class="down">${price}</td>
            <td class="${side}">${lots}</td><td class="num">${pos}</td><td class="${side}">${kind}</td></tr>`;
    }).join('');
}

drawMain();
drawVolume();
drawMacd();
drawAxis('axis-main', 46, 585, [['5000', 114], ['4500', 220], ['4000', 325], ['3500', 430], ['3000', 535]]);
drawAxis('axis-vol', 632, 155, [['1200万', 668], ['600万', 726]]);
drawAxis('axis-macd', 788, 234, [['200', 845], ['0', 914], ['-200', 983]]);
drawDates();
drawMarks();
drawTicks();
```
